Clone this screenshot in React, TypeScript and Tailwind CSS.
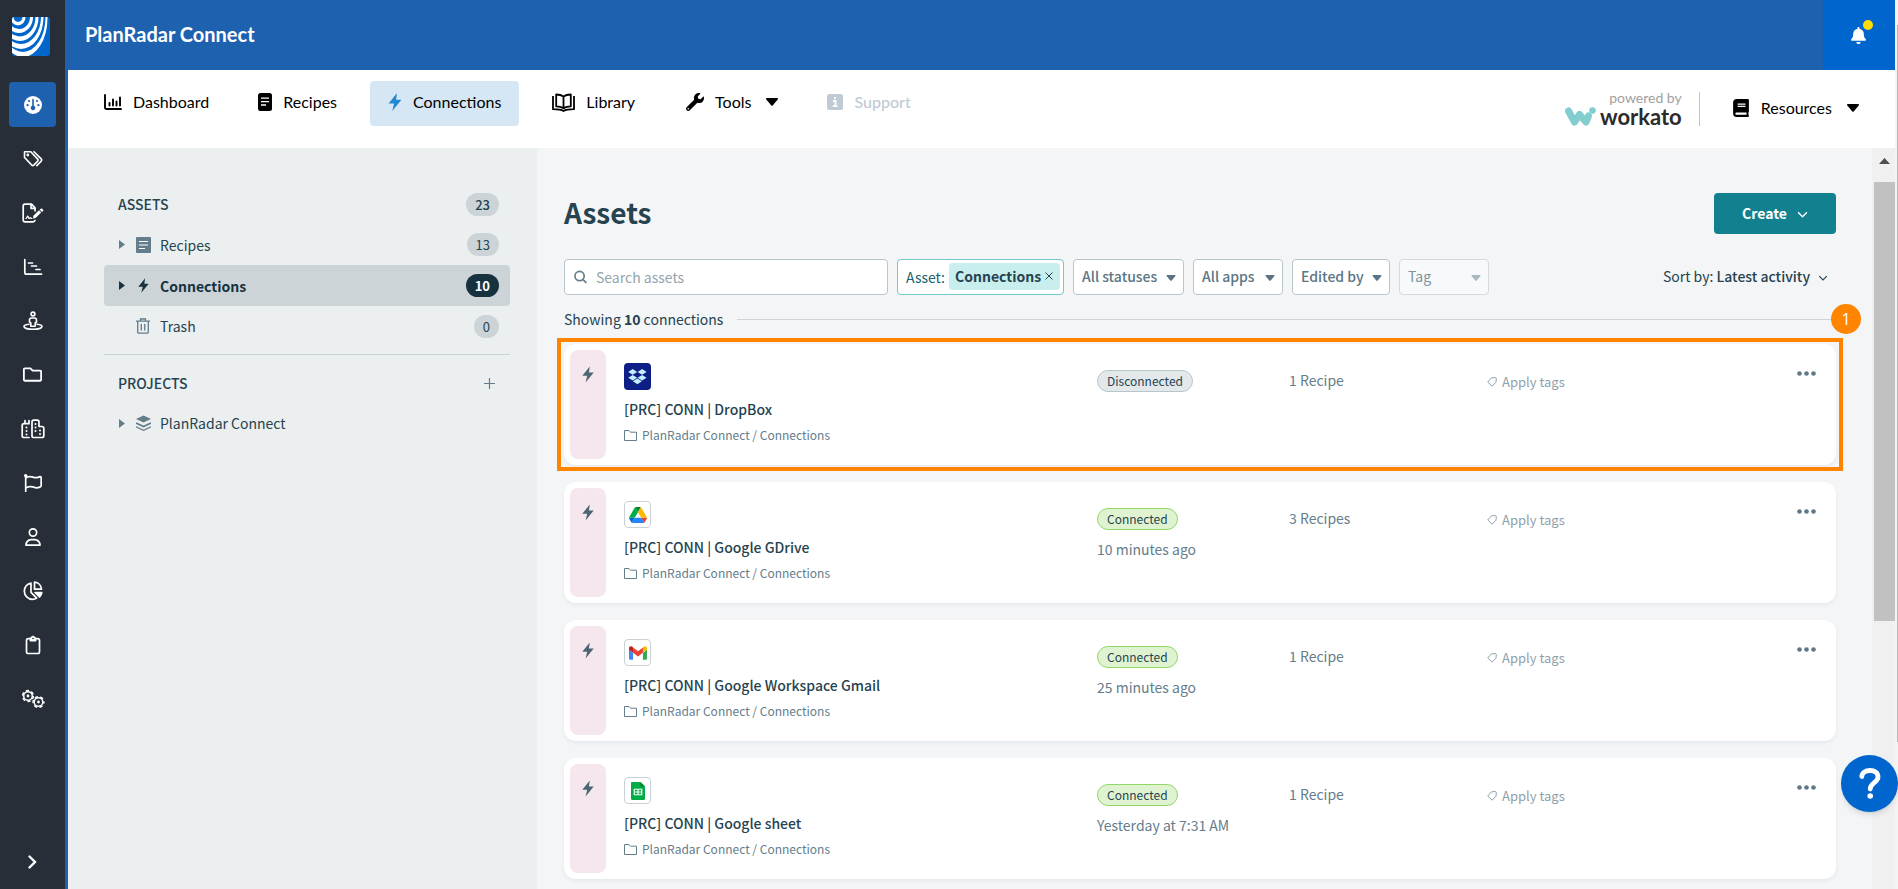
import React from "react";
import { FaBell, FaBook, FaWrench, FaRegFolder, FaRegFlag } from "react-icons/fa";
import { FaRegUser } from "react-icons/fa6";

const railIcons = [
  {
    label: "Tickets",
    icon: (
      <svg width="20" height="18" viewBox="0 0 20 18" fill="none" stroke="currentColor" strokeWidth="1.6" strokeLinejoin="round" strokeLinecap="round">
        <path d="M1.5 2v5.5l7.3 7.6c.6.6 1.4.6 2 0l3.9-4c.6-.6.6-1.4 0-2L7.8 1.7H2z" />
        <path d="M11 1.7l7.2 7.2c.7.7.7 1.5 0 2.2l-4.4 4.5" />
        <circle cx="4.8" cy="5" r=".6" fill="currentColor" />
      </svg>
    ),
  },
  {
    label: "Forms",
    icon: (
      <svg width="22" height="20" viewBox="0 0 22 20" fill="none" stroke="currentColor" strokeWidth="1.7" strokeLinejoin="round" strokeLinecap="round">
        <path d="M13 17.5c-.4.9-1 1.3-1.8 1.3H3c-1 0-1.8-.8-1.8-1.8V3c0-1 .8-1.8 1.8-1.8h6.5L13 4.8v3" />
        <path d="M9 1.5V5.300h3.800" />
        <path d="M4 15.500c1-.5 1.200-2.500 1.800-2.500s.6 2.500 1.200 2.500.8-.8 1.300-.8.600.8 1.700.8" strokeWidth="1.2" />
        <path d="M11 15.500l.4-2.700 5.600-5.500 2.200 2.200-5.600 5.500z" fill="currentColor" stroke="none" />
        <path d="M17.700 6.700l1.100-1c.4-.4.900-.4 1.300 0l1 1c.4.4.4.900 0 1.300l-1.100 1z" fill="currentColor" stroke="none" />
      </svg>
    ),
  },
  {
    label: "Schedule",
    icon: (
      <svg width="20" height="18" viewBox="0 0 20 18" fill="none" stroke="currentColor" strokeWidth="1.7" strokeLinecap="round">
        <path d="M1.800 1.500v13c0 1 .6 1.700 1.700 1.700h15M5.500 5h4M8.500 8h5M13 11.500h4" />
      </svg>
    ),
  },
  {
    label: "Site view",
    icon: (
      <svg width="20" height="20" viewBox="0 0 20 20" fill="none" stroke="currentColor" strokeWidth="1.6" strokeLinejoin="round">
        <circle cx="10" cy="3" r="1.9" />
        <path d="M8.500 7h3c1.200 0 2 .8 2 2v2l-1.300 1v3.200H7.800V12l-1.300-1V9c0-1.200.8-2 2-2z" />
        <path d="M6 13.300c-2.900.3-5 1-5 2.100 0 1.600 4 2.800 9 2.800s9-1.200 9-2.800c0-1.100-2.100-1.800-5-2.100" strokeLinecap="round" />
      </svg>
    ),
  },
  { label: "Documents", icon: <FaRegFolder size={19} /> },
  {
    label: "Buildings",
    icon: (
      <svg width="24" height="20" viewBox="0 0 24 20" fill="none" stroke="currentColor" strokeWidth="1.7" strokeLinejoin="round" strokeLinecap="round">
        <path d="M8 18.500H3c-1 0-1.800-.8-1.800-1.800V6.500c0-1 .8-1.800 1.800-1.800h5M4 1.500v3M8 1.500v3" />
        <path d="M18 7.500V3c0-1-.8-1.800-1.800-1.800h-3.400C11.800 1.200 11 2 11 3v13.700c0 1 .8 1.800 1.800 1.800h8.200c1 0 1.800-.8 1.800-1.800V9.300c0-1-.8-1.800-1.800-1.800z" />
        <path d="M5.500 8.500v.1M5.500 12v.1M5.500 15.500v.1M14.500 5v.1M14.500 8.500v.1M14.500 12v.1M19 11.500v.1M19 15v.1" strokeWidth="2" />
      </svg>
    ),
  },
  { label: "Defects", icon: <FaRegFlag size={18} /> },
  { label: "Users", icon: <FaRegUser size={18} /> },
  {
    label: "Statistics",
    icon: (
      <svg width="20" height="20" viewBox="0 0 20 20" fill="none" stroke="currentColor" strokeWidth="1.7" strokeLinejoin="round">
        <path d="M8 2.200C4.200 2.700 1.300 5.900 1.300 10c0 4.600 3.700 8.300 8.200 8.300 1.700 0 3-.4 4.200-1.200L8 11.300z" />
        <path d="M11.500 1.200v7h7c-.3-3.800-3.200-6.700-7-7z" />
        <path d="M12 11.500h6.800c-.2 1.700-1 3.300-2.200 4.500z" fill="currentColor" />
      </svg>
    ),
  },
  {
    label: "Reports",
    icon: (
      <svg width="16" height="20" viewBox="0 0 16 20" fill="none" stroke="currentColor" strokeWidth="1.7" strokeLinejoin="round">
        <path d="M5 3.700H3.200c-1 0-1.700.700-1.700 1.700v11.400c0 1 .7 1.700 1.700 1.700h9.600c1 0 1.700-.7 1.700-1.700V5.400c0-1-.7-1.700-1.700-1.700H11" />
        <path d="M5 3c1 0 1.200-1.800 3-1.800S10 3 11 3v3H5z" fill="currentColor" strokeWidth="1" />
        <circle cx="8" cy="3.500" r=".8" fill="#272e38" stroke="none" />
      </svg>
    ),
  },
  {
    label: "Settings",
    icon: (
      <svg width="24" height="20" viewBox="0 0 24 20" fill="none" stroke="currentColor" strokeLinejoin="round">
        <circle cx="7" cy="7" r="4.300" strokeWidth="1.5" />
        <circle cx="7" cy="7" r="5.400" strokeWidth="1.5" strokeDasharray="3.2 2.45" />
        <circle cx="7" cy="7" r="1.400" fill="currentColor" stroke="none" />
        <circle cx="17.500" cy="13" r="4.300" strokeWidth="1.5" />
        <circle cx="17.500" cy="13" r="5.400" strokeWidth="1.5" strokeDasharray="3.2 2.45" strokeDashoffset="1.6" />
        <circle cx="17.500" cy="13" r="1.400" fill="currentColor" stroke="none" />
      </svg>
    ),
  },
];

const connections = [
  { app: "dropbox", name: "[PRC] CONN | DropBox", status: "Disconnected", time: "", recipes: "1 Recipe", marked: true },
  { app: "drive", name: "[PRC] CONN | Google GDrive", status: "Connected", time: "10 minutes ago", recipes: "3 Recipes" },
  { app: "gmail", name: "[PRC] CONN | Google Workspace Gmail", status: "Connected", time: "25 minutes ago", recipes: "1 Recipe" },
  { app: "sheets", name: "[PRC] CONN | Google sheet", status: "Connected", time: "Yesterday at 7:31 AM", recipes: "1 Recipe" },
];

function Bolt({ className }: { className: string }) {
  return (
    <svg className={className} viewBox="0 0 12 16" fill="currentColor">
      <path d="M7.800 0L.3 9.300h4.900L3.600 16l8.100-10H6.900z" />
    </svg>
  );
}

function Caret({ className }: { className: string }) {
  return (
    <svg className={className} viewBox="0 0 12 8" fill="currentColor">
      <path d="M1 0h10c.9 0 1.300 1 .7 1.600L6.700 7.500c-.4.400-1 .400-1.400 0L.3 1.600C-.3 1 .1 0 1 0z" />
    </svg>
  );
}

function RightCaret() {
  return (
    <svg className="w-[6px] h-[9px]" viewBox="0 0 6 9" fill="currentColor">
      <path d="M0 0l6 4.500L0 9z" />
    </svg>
  );
}

function Chevron({ className }: { className: string }) {
  return (
    <svg className={className} viewBox="0 0 12 8" fill="none" stroke="currentColor" strokeWidth="1.6">
      <path d="M1 1.500l5 5 5-5" />
    </svg>
  );
}

function AppIcon({ app }: { app: string }) {
  if (app === "dropbox") {
    return (
      <svg width="27" height="27" viewBox="0 0 27 27">
        <rect width="27" height="27" rx="4" fill="#0d1f86" />
        <g fill="#c3eefc">
          <path d="M8.700 6l4.500 2.900-4.500 2.900-4.500-2.900zM18.100 6l4.500 2.900-4.500 2.900-4.500-2.900zM8.700 11.900l4.500 2.800-4.500 2.900-4.500-2.900zM18.100 11.900l4.500 2.800-4.500 2.900-4.500-2.900zM13.400 15.500l4.500 2.800-4.500 2.900-4.500-2.900z" />
        </g>
      </svg>
    );
  }
  return (
    <div className="flex size-[27px] items-center justify-center rounded border border-[#c9d1d7] bg-white">
      {app === "drive" && (
        <svg width="18" height="16" viewBox="0 0 87.300 78">
          <path d="M6.600 66.850l3.850 6.650c.8 1.400 1.950 2.500 3.300 3.300L27.500 53H0c0 1.550.4 3.100 1.200 4.500z" fill="#0066da" />
          <path d="M43.650 25L29.900 1.200c-1.350.8-2.500 1.900-3.300 3.300L1.200 48.500A9.060 9.060 0 0 0 0 53h27.500z" fill="#00ac47" />
          <path d="M73.550 76.800c1.350-.8 2.500-1.900 3.300-3.300l1.600-2.750L86.100 57.500c.8-1.400 1.200-2.950 1.200-4.500H59.800l5.850 11.500z" fill="#ea4335" />
          <path d="M43.650 25L57.400 1.200C56.050.4 54.500 0 52.900 0H34.400c-1.600 0-3.150.45-4.500 1.200z" fill="#00832d" />
          <path d="M59.800 53H27.500L13.750 76.800c1.350.8 2.900 1.200 4.500 1.200h50.800c1.600 0 3.150-.45 4.500-1.200z" fill="#2684fc" />
          <path d="M73.400 26.500l-12.700-22c-.8-1.400-1.950-2.500-3.300-3.300L43.650 25 59.800 53h27.450c0-1.550-.4-3.100-1.200-4.500z" fill="#ffba00" />
        </svg>
      )}
      {app === "gmail" && (
        <svg width="18" height="14" viewBox="52 42 88 66">
          <path fill="#4285f4" d="M58 108h14V74L52 59v43c0 3.320 2.690 6 6 6" />
          <path fill="#34a853" d="M120 108h14c3.320 0 6-2.690 6-6V59l-20 15" />
          <path fill="#fbbc04" d="M120 48v26l20-15v-8c0-7.420-8.470-11.650-14.400-7.200" />
          <path fill="#ea4335" d="M72 74V48l24 18 24-18v26L96 92" />
          <path fill="#c5221f" d="M52 51v8l20 15V48l-5.600-4.200c-5.940-4.450-14.400-.22-14.400 7.200" />
        </svg>
      )}
      {app === "sheets" && (
        <svg width="14" height="18" viewBox="0 0 14 18">
          <path d="M1.200 0H9.500L14 4.500v12.300c0 .7-.5 1.200-1.200 1.200H1.200C.5 18 0 17.500 0 16.800V1.200C0 .5.500 0 1.200 0z" fill="#00ac47" />
          <path d="M9.500 0L14 4.500H9.500z" fill="#00832d" />
          <path d="M3.200 7.200h7.600v5.600H3.200zM3.200 10h7.600M7 7.200v5.600" fill="none" stroke="#fff" strokeWidth="1.1" />
        </svg>
      )}
    </div>
  );
}

function Rail() {
  return (
    <nav className="flex w-[68px] shrink-0 flex-col items-center border-r-[3px] border-[#1e61af] bg-[#272e38] pt-[17px] text-white">
      <a href="#home" aria-label="Home" className="mr-[3px]">
        <svg width="38" height="39" viewBox="0 0 38 39">
          <clipPath id="logoClip">
            <rect width="38" height="39" rx="3" />
          </clipPath>
          <g clipPath="url(#logoClip)">
            <rect width="38" height="39" fill="#0066cc" />
            <ellipse cx="11" cy="1" rx="24.500" ry="39" fill="#fff" />
            <ellipse cx="11" cy="0" rx="22.500" ry="35" fill="#0066cc" />
            <ellipse cx="9" cy="0" rx="22.500" ry="32" fill="#fff" />
            <ellipse cx="9" cy="0" rx="20" ry="27" fill="#0066cc" />
            <ellipse cx="8" cy="0" rx="18.500" ry="24" fill="#fff" />
            <ellipse cx="8" cy="0" rx="15.500" ry="19.500" fill="#0066cc" />
            <ellipse cx="7" cy="0" rx="14" ry="16" fill="#fff" />
            <ellipse cx="7" cy="0" rx="11" ry="12" fill="#0066cc" />
            <ellipse cx="6" cy="0" rx="7.500" ry="8.500" fill="#fff" />
            <ellipse cx="6" cy="0" rx="4.500" ry="5" fill="#0066cc" />
          </g>
        </svg>
      </a>
      <div className="mt-[26px] flex flex-col gap-[9px]">
        <button aria-label="Connect" className="flex h-[45px] w-[47px] items-center justify-center rounded bg-[#1e61af]">
          <svg width="18" height="18" viewBox="0 0 18 18">
            <circle cx="9" cy="9" r="9" fill="#fff" />
            <g fill="#1e61af">
              <path d="M8.200 3.500c0-1.100 1.600-1.100 1.600 0v6.300a2.300 2.300 0 1 1-1.600 0z" />
              <circle cx="5" cy="5" r="1.100" />
              <circle cx="13" cy="5" r="1.100" />
              <circle cx="3.600" cy="9.200" r="1.100" />
              <circle cx="14.400" cy="9.200" r="1.100" />
            </g>
          </svg>
        </button>
        {railIcons.map((item) => (
          <button key={item.label} aria-label={item.label} className="flex h-[45px] w-[47px] items-center justify-center">
            {item.icon}
          </button>
        ))}
      </div>
      <button aria-label="Expand menu" className="mt-auto mb-5">
        <svg width="9" height="14" viewBox="0 0 9 14" fill="none" stroke="currentColor" strokeWidth="2.4" strokeLinecap="round">
          <path d="M1.500 1.500L7 7l-5.500 5.500" />
        </svg>
      </button>
    </nav>
  );
}

function TopNav() {
  const link = "flex h-[45px] items-center gap-[11px] pb-[3px]";
  return (
    <div className="flex h-[78px] shrink-0 items-start bg-white pt-[11px] font-['Lato',sans-serif] text-base text-black">
      <nav className="flex pl-9">
        <a href="#dashboard" className={link}>
          <svg width="18" height="16" viewBox="0 0 18 16" fill="none" stroke="currentColor" strokeWidth="1.9" strokeLinecap="round">
            <path d="M1 1v12.200c0 1 .600 1.800 1.600 1.800H17M5.500 9v2.500M9 5.500v6M12.500 7.500v4M16 3.500v8" />
          </svg>
          Dashboard
        </a>
        <a href="#recipes" className={`${link} ml-[49px]`}>
          <svg width="14" height="18" viewBox="0 0 14 18">
            <rect width="14" height="18" rx="2.500" fill="currentColor" />
            <path d="M3 5.200h8M3 8.600h8M3 12h5" stroke="#fff" strokeWidth="1.3" />
          </svg>
          Recipes
        </a>
        <a href="#connections" className={`${link} ml-[33px] rounded bg-[#d5e7f4] px-[18px]`}>
          <Bolt className="h-[18px] w-[14px] text-[#2089cf]" />
          Connections
        </a>
        <a href="#library" className={`${link} ml-[33px]`}>
          <svg width="23" height="19" viewBox="0 0 23 19" fill="none" stroke="currentColor" strokeWidth="1.8" strokeLinejoin="round">
            <path d="M11.500 3.500C9.500 2 7 1.500 4.200 1.500v11.800c2.800 0 5.300.500 7.300 2 2-1.500 4.500-2 7.300-2V1.500c-2.800 0-5.300.500-7.300 2zM11.500 3.500v11.800" />
            <path d="M1 3v13.200c4 0 8 .300 10.500 1.800 2.500-1.500 6.500-1.800 10.500-1.800V3" />
          </svg>
          Library
        </a>
        <button className={`${link} ml-[51px]`}>
          <FaWrench size={18} />
          Tools
          <Caret className="ml-1 h-2 w-3" />
        </button>
        <a href="#support" className={`${link} ml-[49px] font-medium text-[#bfcad5]`}>
          <svg width="16" height="16" viewBox="0 0 16 16">
            <rect width="16" height="16" rx="2.500" fill="currentColor" />
            <path d="M6 7h2.500v4.800M5.800 12h4.600M8 3v2" stroke="#fff" strokeWidth="1.9" fill="none" />
          </svg>
          Support
        </a>
      </nav>
      <div className="ml-auto mt-[11px] flex items-start pr-9">
        <div className="flex h-[34px] flex-col items-end justify-between border-r border-[#bcc6ce] pr-[17px]">
          <span className="text-sm leading-3 text-[#9f9f9f]">powered by</span>
          <span className="flex items-center gap-1 text-[22px] leading-[18px] font-bold text-[#2b2b2b]">
            <svg width="31" height="19" viewBox="0 0 31 19" fill="none" stroke="#82cdcd" strokeWidth="7" strokeLinecap="round" strokeLinejoin="round">
              <path d="M3.500 4l6 11 5-7.500 6.500 7.500 2.500-6" />
              <circle cx="27.500" cy="3.500" r="3.300" fill="#82cdcd" stroke="none" />
            </svg>
            workato
          </span>
        </div>
        <button className="ml-8 mt-1 flex items-center gap-[11px]">
          <FaBook size={18} />
          Resources
          <Caret className="ml-1 h-2 w-3" />
        </button>
      </div>
    </div>
  );
}

function Count({ value, active }: { value: string; active?: boolean }) {
  return (
    <span className={`ml-auto rounded-full px-[9px] text-[13px] leading-[23px] ${active ? "bg-[#16323f] font-bold text-white" : "bg-[#ccd4d8] text-[#26434f]"}`}>
      {value}
    </span>
  );
}

function Sidebar() {
  const row = "flex items-center rounded pl-[15px] pr-[11px]";
  return (
    <aside className="w-[469px] shrink-0 bg-[#ebeff0] pt-9 pr-[27px] pl-9 text-sm text-[#26434f]">
      <div className={`${row} h-10 font-medium`}>
        <span className="-ml-px">ASSETS</span>
        <Count value="23" />
      </div>
      <a href="#all-recipes" className={`${row} h-[41px]`}>
        <span className="text-[#647d8b]"><RightCaret /></span>
        <svg className="ml-[11px] mr-[9px] text-[#647d8b]" width="15" height="16" viewBox="0 0 15 16">
          <rect width="15" height="16" rx="1" fill="currentColor" />
          <path d="M3 4.500h9M3 8h9M3 11.500h6" stroke="#fff" strokeWidth="1.2" />
        </svg>
        Recipes
        <Count value="13" />
      </a>
      <a href="#all-connections" className={`${row} h-[41px] bg-[#ccd4d8] font-bold text-[#16323f]`}>
        <RightCaret />
        <Bolt className="ml-[13px] mr-[11px] h-[15px] w-[11px]" />
        Connections
        <Count value="10" active />
      </a>
      <a href="#trash" className={`${row} h-10`}>
        <svg className="ml-[17px] mr-[10px] text-[#647d8b]" width="14" height="16" viewBox="0 0 14 16" fill="none" stroke="currentColor" strokeWidth="1.3">
          <path d="M0 3.200h14M1.700 3.200v11c0 .7.300 1 1 1h8.600c.7 0 1-.3 1-1v-11M4.500 3V1h5v2M5.300 6v6.500M8.700 6v6.500" />
        </svg>
        Trash
        <Count value="0" />
      </a>
      <div className="mt-2 border-t border-[#c9d2d9]" />
      <div className={`${row} mt-2 h-10 font-medium`}>
        <span className="-ml-px">PROJECTS</span>
        <button aria-label="Add project" className="ml-auto mr-[4px] text-[#647d8b]">
          <svg width="11" height="11" viewBox="0 0 11 11" stroke="currentColor" strokeWidth="1.2">
            <path d="M5.500 0v11M0 5.500h11" />
          </svg>
        </button>
      </div>
      <a href="#planradar-connect" className={`${row} h-10`}>
        <span className="text-[#647d8b]"><RightCaret /></span>
        <svg className="ml-[11px] mr-[9px] text-[#647d8b]" width="15" height="16" viewBox="0 0 15 16" fill="none" stroke="currentColor">
          <path d="M7.500.5L15 4 7.500 7.500 0 4z" fill="currentColor" stroke="none" />
          <path d="M0 8l7.500 3.500L15 8" strokeWidth="1.9" />
          <path d="M0 11.800l7.500 3.500 7.500-3.500" strokeWidth="1.1" />
        </svg>
        PlanRadar Connect
      </a>
    </aside>
  );
}

function FilterSelect({ label, disabled, width }: { label: string; disabled?: boolean; width: string }) {
  return (
    <div className={`relative h-9 ${width}`}>
      <select
        aria-label={label}
        disabled={disabled}
        className={`h-9 w-full appearance-none rounded border pb-[2px] pl-2 text-sm ${disabled ? "border-[#d3dade] bg-[#f7f9fa] text-[#7d929d]" : "border-[#b9c5cd] bg-white font-medium text-[#5b7583]"}`}
      >
        <option>{label}</option>
      </select>
      <Caret className={`pointer-events-none absolute right-2 top-4 h-[6px] w-[10px] ${disabled ? "text-[#aab8bf]" : "text-[#5b7583]"}`} />
    </div>
  );
}

function ConnectionCard({ item }: { item: (typeof connections)[number] }) {
  return (
    <li className="relative flex rounded-xl bg-white p-[6px] pr-5 shadow-[0_2px_4px_rgba(30,50,60,0.06)]">
      {item.marked && <div className="pointer-events-none absolute -top-[6px] -right-[7px] -bottom-[6px] -left-[7px] border-4 border-[#ff8500]" />}
      <div className="flex h-[109px] w-9 shrink-0 justify-center rounded-lg bg-[#f6e6ee] pt-4 pr-px text-[#4b6573]">
        <Bolt className="h-[17px] w-3" />
      </div>
      <div className="ml-[18px] grid grow grid-cols-[473fr_192fr_198fr_329fr] pt-[13px]">
        <div>
          <AppIcon app={item.app} />
          <a href="#connection" className="mt-2 block text-sm leading-[22px] font-medium text-[#26434f]">{item.name}</a>
          <a href="#folder" className="mt-1 flex items-center gap-[5px] text-xs leading-[22px] text-[#647d8b]">
            <svg width="13" height="11" viewBox="0 0 13 11" fill="none" stroke="currentColor">
              <path d="M.5.500H5L6.500 2.200h6v8.300H.5z" />
            </svg>
            PlanRadar Connect / Connections
          </a>
        </div>
        <div className="pt-[7px] text-sm text-[#647d8b]">
          <span className={`inline-block rounded-full border px-[9px] text-xs leading-[20px] text-[#26434f] ${item.status === "Connected" ? "border-[#93d768] bg-[#e0f3d1]" : "border-[#b9c5cd] bg-[#e3e8eb]"}`}>
            {item.status}
          </span>
          <p className="mt-[9px] leading-5">{item.time}</p>
        </div>
        <div className="pt-[6px] text-sm leading-[22px] text-[#647d8b]">{item.recipes}</div>
        <div className="flex items-start justify-between text-[13px] text-[#8fa1aa]">
          <button className="mt-2 flex items-center gap-[5px] leading-[22px]">
            <svg width="10" height="10" viewBox="0 0 10 10" fill="none" stroke="currentColor">
              <path d="M4.500.8L8.500.600c.500 0 .800.300.800.800L9 5.200 5.200 9.200.700 5z" />
            </svg>
            Apply tags
          </button>
          <button aria-label="More actions" className="mt-2 text-[#5f7886]">
            <svg width="19" height="5" viewBox="0 0 19 5" fill="currentColor">
              <circle cx="2.500" cy="2.500" r="2.300" />
              <circle cx="9.500" cy="2.500" r="2.300" />
              <circle cx="16.500" cy="2.500" r="2.300" />
            </svg>
          </button>
        </div>
      </div>
    </li>
  );
}

function Assets() {
  return (
    <main className="grow overflow-hidden bg-[#f3f5f7] pt-[45px] pr-9 pl-[27px] text-sm text-[#26434f]">
      <div className="flex items-start justify-between">
        <h1 className="text-[28px] leading-[38px] font-bold">Assets</h1>
        <button className="flex h-[41px] w-[122px] items-center justify-center gap-[10px] rounded bg-[#12818f] pb-[2px] font-bold text-white">
          Create
          <Chevron className="mt-1 h-[7px] w-[11px]" />
        </button>
      </div>
      <div className="mt-[25px] flex items-center gap-[9px]">
        <label className="flex h-9 w-[324px] items-center gap-[9px] rounded border border-[#b9c5cd] bg-white px-[9px]">
          <svg width="14" height="14" viewBox="0 0 14 14" fill="none" stroke="#647d8b" strokeWidth="1.8">
            <circle cx="6" cy="6" r="5" />
            <path d="M9.500 9.500L13.300 13.300" />
          </svg>
          <input type="text" aria-label="Search assets" placeholder="Search assets" className="w-full outline-none placeholder:text-[#93a4ad]" />
        </label>
        <div className="flex h-9 w-[167px] items-center justify-between rounded border border-[#6fcac9] bg-white pl-2 pr-[3px] pb-px text-[#17636f]">
          Asset:
          <span className="flex h-[27px] w-[111px] items-center justify-between rounded bg-[#c8eeed] pl-[6px] pr-[7px] pb-px font-bold text-[#26434f]">
            Connections
            <button aria-label="Clear asset filter">
              <svg width="8" height="8" viewBox="0 0 8 8" stroke="currentColor">
                <path d="M.5.500l7 7M7.500.500l-7 7" />
              </svg>
            </button>
          </span>
        </div>
        <FilterSelect label="All statuses" width="w-[111px]" />
        <FilterSelect label="All apps" width="w-[90px]" />
        <FilterSelect label="Edited by" width="w-[98px]" />
        <FilterSelect label="Tag" width="w-[90px]" disabled />
        <button className="ml-auto mr-2 flex items-center gap-2 pb-[2px]">
          <span>Sort by: <span className="font-medium">Latest activity</span></span>
          <Chevron className="mt-1 h-[6px] w-[10px]" />
        </button>
      </div>
      <div className="relative mt-[13px] flex items-center gap-[14px]">
        <p className="leading-[22px]">Showing <b>10</b> connections</p>
        <div className="grow border-t border-[#cdd5da]" />
        <span className="absolute -right-[25px] flex size-[30px] items-center justify-center rounded-full bg-[#ff8500] font-['Open_Sans',sans-serif] text-base text-white">1</span>
      </div>
      <ul className="mt-[14px] flex flex-col gap-[17px]">
        {connections.map((item) => (
          <ConnectionCard key={item.app} item={item} />
        ))}
      </ul>
    </main>
  );
}

export default function App() {
  return (
    <div className="flex h-screen overflow-hidden bg-white font-['Noto_Sans_CJK_SC',sans-serif]">
      <Rail />
      <div className="flex min-w-0 grow flex-col">
        <header className="flex h-[70px] shrink-0 bg-[#1e61af] pl-[17px] font-['Lato',sans-serif] text-white">
          <h2 className="text-xl leading-[68px] font-bold">PlanRadar Connect</h2>
          <button aria-label="Notifications" className="relative ml-auto flex w-[72px] items-center justify-center bg-[#0065cc]">
            <FaBell size={17} className="mr-[2px]" />
            <span className="absolute top-5 right-[22px] size-[10px] rounded-full bg-[#ffdb0a]" />
          </button>
        </header>
        <TopNav />
        <div className="flex min-h-0 grow">
          <Sidebar />
          <Assets />
          <div className="flex w-[23px] shrink-0 flex-col items-end bg-[#f0f0f0] pt-[10px]">
            <svg className="mr-[5px]" width="11" height="6" viewBox="0 0 11 6" fill="#505050">
              <path d="M5.500 0L11 6H0z" />
            </svg>
            <div className="mt-[18px] h-[60%] w-[21px] bg-[#c1c1c1]" />
          </div>
        </div>
      </div>
      <div className="w-[3px] shrink-0 bg-[#f4f4f4] pt-[25px]">
        <div className="ml-auto h-[83%] w-px bg-[#b5b5b5]" />
      </div>
      <button aria-label="Help" className="fixed right-0 bottom-[77px] flex size-[57px] items-center justify-center rounded-full bg-[#0065cc] text-white shadow-md">
        <svg width="22" height="31" viewBox="0 0 22 31" fill="none" stroke="currentColor" strokeWidth="4.8" strokeLinecap="round">
          <path d="M2.800 8.500C3 4.800 6.300 2.500 11 2.500s8 2.500 8 6.500c0 5.500-7.800 5.800-7.800 12" />
          <circle cx="11.200" cy="28" r="2.800" fill="currentColor" stroke="none" />
        </svg>
      </button>
    </div>
  );
}
